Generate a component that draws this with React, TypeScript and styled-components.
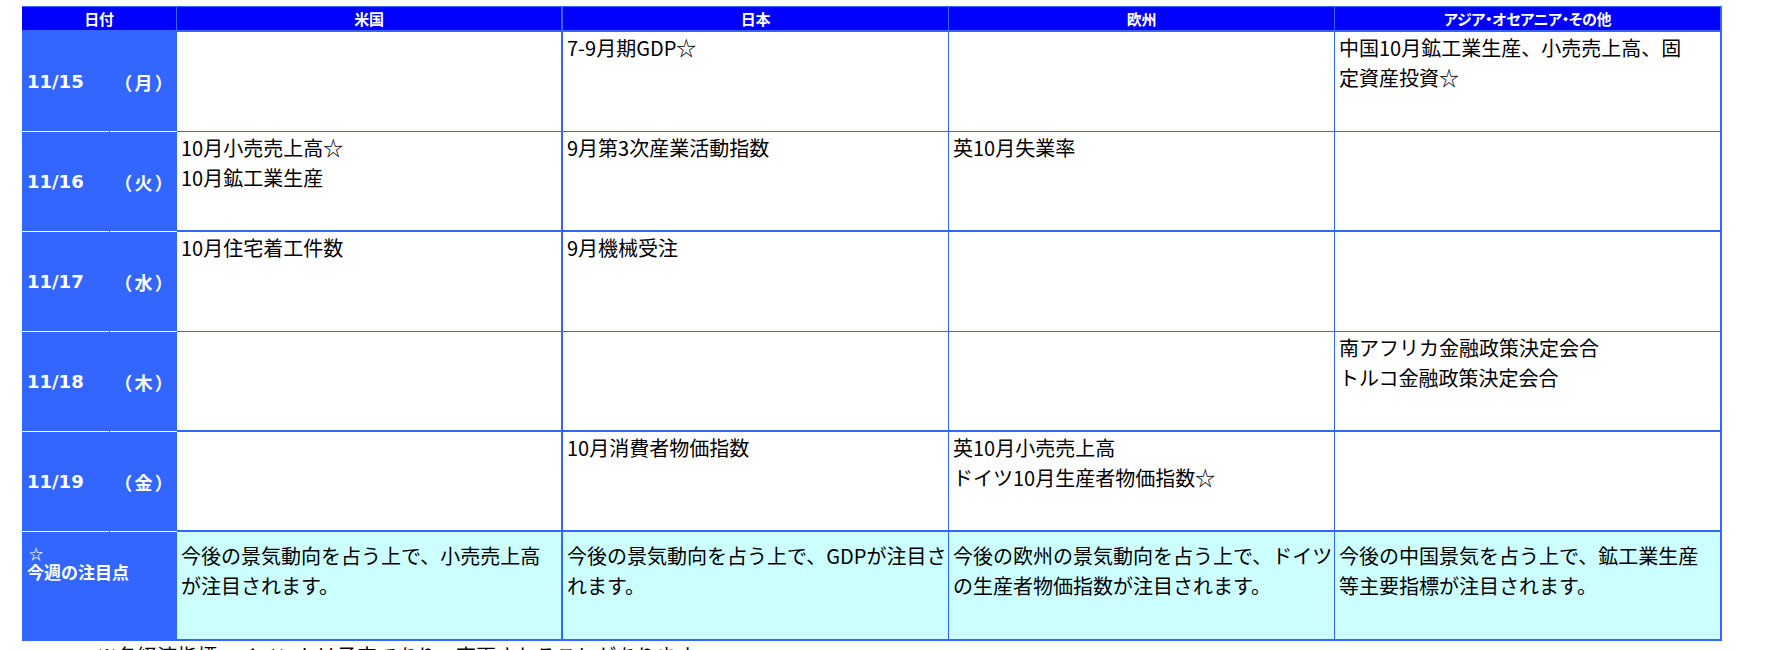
import React from "react";
import styled, { createGlobalStyle } from "styled-components";

const Global = createGlobalStyle`
  html, body { margin: 0; padding: 0; background: #ffffff; }
  body { font-family: "Noto Sans CJK JP", "Noto Sans", sans-serif; color: #000; }
  * { box-sizing: border-box; }
`;

const BLUE = "#3366ff";
const HEAD = "#0000ff";
const CYAN = "#ccffff";

const Page = styled.div`
  padding: 6px 0 0 22px;
  width: 1786px;
  height: 650px;
  overflow: hidden;
`;

const Table = styled.div`
  display: grid;
  grid-template-columns: 155px 386px 386px 386px 387px;
  grid-template-rows: 26px repeat(5, 100px) 109px;
  width: 1700px;
`;

const HeadCell = styled.div<{ $br: number }>`
  background: ${HEAD};
  color: #fff;
  border-top: 1px solid ${BLUE};
  border-right: ${(p) => p.$br}px solid ${BLUE};
  border-bottom: 2px solid ${BLUE};
  display: flex;
  align-items: center;
  justify-content: center;
  font-family: "Noto Sans CJK JP", sans-serif;
  font-weight: 700;
  font-size: 15px;
  line-height: 1;
  font-feature-settings: "palt";
  letter-spacing: -0.3px;
`;

const DateCell = styled.div`
  display: grid;
  grid-template-columns: 87px 67px;
  column-gap: 1px;
  background: ${BLUE};
  color: #fff;
`;

const DatePart = styled.div<{ $line: boolean; $center?: boolean }>`
  display: flex;
  align-items: center;
  justify-content: ${(p) => (p.$center ? "center" : "flex-start")};
  padding-left: ${(p) => (p.$center ? "0" : "5px")};
  border-bottom: ${(p) => (p.$line ? "1px solid #ffffff" : "none")};
`;

const DateNum = styled.span`
  font-family: "DejaVu Sans", Verdana, sans-serif;
  font-weight: 700;
  font-size: 18px;
`;

const DayName = styled.span`
  font-family: "Noto Sans CJK JP", sans-serif;
  font-weight: 700;
  font-size: 18px;
  font-feature-settings: "palt";
  letter-spacing: 3px;
  margin-right: -3px;
`;

const WeekCell = styled.div`
  background: ${BLUE};
  color: #fff;
  padding: 12px 0 0 5px;
  font-family: "Noto Sans CJK JP", sans-serif;
  font-weight: 700;
  font-size: 17px;
  line-height: 19px;
`;

const WeekStar = styled.div`
  font-size: 14px;
  line-height: 18px;
  padding-left: 2px;
`;

const BodyCell = styled.div<{ $br: number; $bb: number; $cyan?: boolean }>`
  background: ${(p) => (p.$cyan ? CYAN : "#ffffff")};
  border-right: ${(p) => p.$br}px solid ${BLUE};
  border-bottom: ${(p) => p.$bb}px solid ${BLUE};
  padding: ${(p) => (p.$cyan ? "9px" : "1px")} 2px 0 4px;
  font-size: 20px;
  line-height: 30px;
  white-space: nowrap;
  overflow: hidden;
`;

const Line = styled.div`
  display: block;
`;

const Note = styled.div`
  padding-left: 75px;
  font-size: 20px;
  line-height: 30px;
  white-space: nowrap;
`;

const heads = ["米国", "日本", "欧州", "アジア・オセアニア・その他"];
const colBorders = [2, 1, 1, 2];

type Row = { date: string; dow: string; bb: number; cells: string[][] };

const rows: Row[] = [
  {
    date: "11/15",
    dow: "月",
    bb: 1,
    cells: [[], ["7-9月期GDP☆"], [], ["中国10月鉱工業生産、小売売上高、固", "定資産投資☆"]],
  },
  {
    date: "11/16",
    dow: "火",
    bb: 2,
    cells: [["10月小売売上高☆", "10月鉱工業生産"], ["9月第3次産業活動指数"], ["英10月失業率"], []],
  },
  {
    date: "11/17",
    dow: "水",
    bb: 1,
    cells: [["10月住宅着工件数"], ["9月機械受注"], [], []],
  },
  {
    date: "11/18",
    dow: "木",
    bb: 2,
    cells: [[], [], [], ["南アフリカ金融政策決定会合", "トルコ金融政策決定会合"]],
  },
  {
    date: "11/19",
    dow: "金",
    bb: 2,
    cells: [[], ["10月消費者物価指数"], ["英10月小売売上高", "ドイツ10月生産者物価指数☆"], []],
  },
];

const focus: string[][] = [
  ["今後の景気動向を占う上で、小売売上高", "が注目されます。"],
  ["今後の景気動向を占う上で、GDPが注目さ", "れます。"],
  ["今後の欧州の景気動向を占う上で、ドイツ", "の生産者物価指数が注目されます。"],
  ["今後の中国景気を占う上で、鉱工業生産", "等主要指標が注目されます。"],
];

export default function App() {
  return (
    <>
      <Global />
      <Page>
        <Table>
          <HeadCell $br={1}>日付</HeadCell>
          {heads.map((h, i) => (
            <HeadCell key={h} $br={colBorders[i]}>
              {h}
            </HeadCell>
          ))}
          {rows.map((r) => (
            <React.Fragment key={r.date}>
              <DateCell>
                <DatePart $line>
                  <DateNum>{r.date}</DateNum>
                </DatePart>
                <DatePart $line $center>
                  <DayName>（{r.dow}）</DayName>
                </DatePart>
              </DateCell>
              {r.cells.map((c, i) => (
                <BodyCell key={i} $br={colBorders[i]} $bb={r.bb}>
                  {c.map((t) => (
                    <Line key={t}>{t}</Line>
                  ))}
                </BodyCell>
              ))}
            </React.Fragment>
          ))}
          <WeekCell>
            <WeekStar>☆</WeekStar>
            <Line>今週の注目点</Line>
          </WeekCell>
          {focus.map((c, i) => (
            <BodyCell key={i} $br={colBorders[i]} $bb={2} $cyan>
              {c.map((t) => (
                <Line key={t}>{t}</Line>
              ))}
            </BodyCell>
          ))}
        </Table>
        <Note>※各経済指標・イベントは予定であり、変更されることがあります。</Note>
      </Page>
    </>
  );
}
